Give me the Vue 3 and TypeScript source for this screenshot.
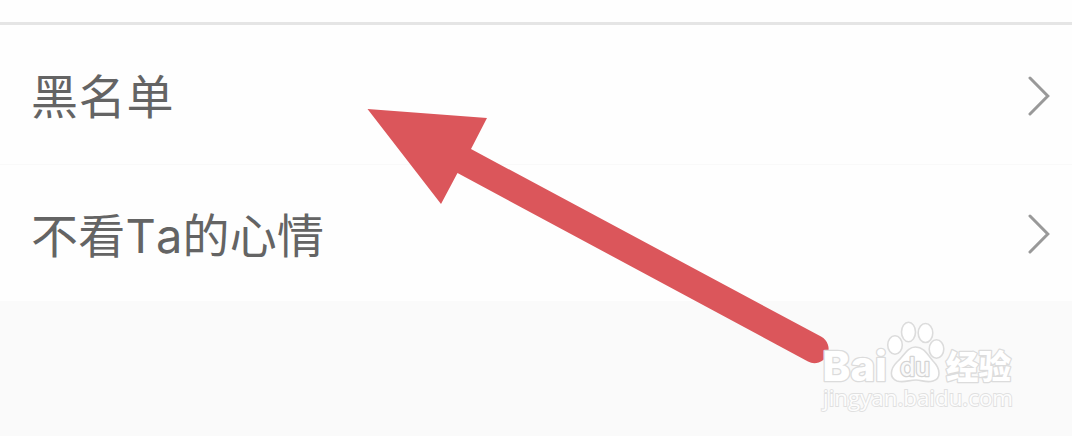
<template>
  <div class="page">
    <div class="top-bar"></div>
    <div class="list">
      <div v-for="item in items" :key="item" class="row">
        <span class="label">{{ item }}</span>
        <svg class="chevron" width="24" height="42" viewBox="0 0 24 42">
          <path d="M2 4 L19.800 22 L2 40" />
        </svg>
      </div>
    </div>

    <svg class="arrow" width="1072" height="436" viewBox="0 0 1072 436">
      <path d="M367.5 109 L487 118 L471 149 L821 336.5 A13.8 13.8 0 0 1 808 361.500 L457.500 173 L441 204 Z" />
    </svg>

    <svg class="watermark" width="204" height="100" viewBox="0 0 204 100">
      <g class="brand">
        <text x="2.500" y="61" font-size="41" textLength="64.500" lengthAdjust="spacingAndGlyphs">Bai</text>
        <ellipse cx="75" cy="25" rx="7.300" ry="9.300" />
        <ellipse cx="88.500" cy="12" rx="7" ry="9.700" />
        <ellipse cx="105.500" cy="13" rx="7.300" ry="9.500" />
        <ellipse cx="116.500" cy="29" rx="7.300" ry="9.300" />
        <path d="M95.500 27 C104 27 107 34 113 41 C121 49 121 59 113 61 C106 63 102 60 96 60 C89 60 84 63 77 61 C69 58 70 49 77 42 C84 36 87 27 95.500 27 Z" />
        <text class="du" x="80" y="56" font-size="25" textLength="30" lengthAdjust="spacingAndGlyphs">du</text>
        <text class="cjk" x="126" y="59" font-size="33" textLength="65" lengthAdjust="spacingAndGlyphs">经验</text>
      </g>
      <text class="url" x="3" y="86" font-size="22" textLength="190" lengthAdjust="spacingAndGlyphs">jingyan.baidu.com</text>
    </svg>
  </div>
</template>

<script setup lang="ts">
import { ref } from 'vue'

const items = ref<string[]>(['黑名单', '不看Ta的心情'])
</script>

<style>
body {
  margin: 0;
}
</style>

<style scoped>
.page {
  position: relative;
  width: 1072px;
  height: 436px;
  overflow: hidden;
  background: #fafafa;
  font-family: Inter, 'Noto Sans CJK SC', sans-serif;
}

.top-bar {
  box-sizing: border-box;
  height: 25px;
  background: #fefefe;
  border-bottom: 3px solid #e5e5e5;
}

.row {
  box-sizing: border-box;
  height: 136px;
  padding: 0 20px 0 31px;
  display: flex;
  align-items: center;
  justify-content: space-between;
  background: #fefefe;
}

.row:first-child {
  height: 140px;
  border-bottom: 1px solid #f9f9f9;
}

.label {
  padding-top: 6px;
  color: #646464;
  font-size: 47px;
  line-height: 70px;
  font-kerning: none;
  letter-spacing: 0.2px;
}

.row:first-child .label {
  padding-top: 5px;
  letter-spacing: 0.8px;
}

.chevron path {
  fill: none;
  stroke: #999;
  stroke-width: 3;
  stroke-linecap: round;
}

.arrow {
  position: absolute;
  left: 0;
  top: 0;
  fill: #db565b;
}

/* Filigrane en bas à droite */
.watermark {
  position: absolute;
  left: 820px;
  top: 320px;
}

.brand {
  fill: #fff;
  stroke: #dcdcdc;
  stroke-width: 1.6;
  font-family: Inter, sans-serif;
  font-weight: 800;
}

.brand text {
  stroke-width: 2.6;
  stroke-linejoin: round;
  paint-order: stroke;
}

.brand .du {
  fill: #fafafa;
  stroke: #d4d4d4;
  font-weight: 500;
}

.brand .cjk {
  font-family: 'Noto Sans CJK SC', sans-serif;
}

.url {
  fill: #fdfdfd;
  stroke: #e0e0e0;
  stroke-width: 1.8;
  paint-order: stroke;
  font-family: 'Open Sans', sans-serif;
}
</style>
